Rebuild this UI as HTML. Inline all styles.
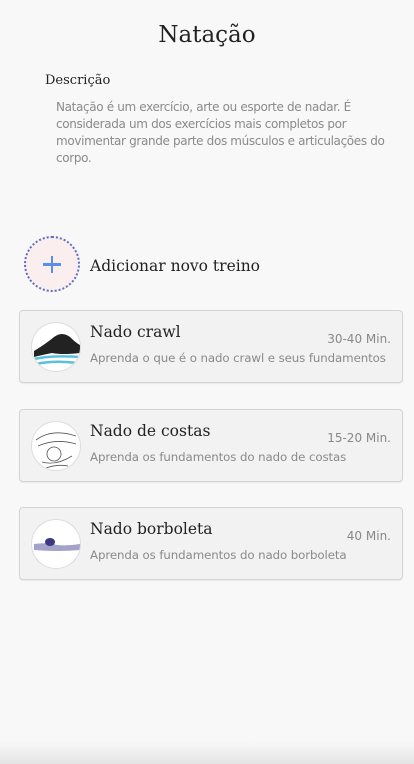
<!DOCTYPE html>
<html><head><meta charset="utf-8"><style>
*{margin:0;padding:0;box-sizing:border-box}
body{width:414px;height:764px;background:#f8f8f8;position:relative;overflow:hidden;font-family:"DejaVu Sans","Liberation Sans",sans-serif}
.serif{font-family:"DejaVu Serif","Liberation Serif",serif;color:#222}
.abs{position:absolute}
h1{position:absolute;top:22px;left:0;width:414px;text-align:center;font-size:23px;font-weight:normal}
.desc{left:45px;top:73px;font-size:13px}
.dtext{left:56px;top:99px;width:345px;font-size:12px;line-height:17px;color:#8a8a8a;letter-spacing:-0.35px}
.add{left:24px;top:236px;width:56px;height:56px;border-radius:50%;border:2px dotted #5a6fc8;background:#fbeeee}
.add:before{content:"";position:absolute;left:17px;top:25px;width:18px;height:2.5px;background:#5b8def}
.add:after{content:"";position:absolute;left:24.7px;top:18px;width:2.5px;height:17px;background:#5b8def}
.addt{left:90px;top:257px;font-size:15.5px}
.card{position:absolute;left:19px;width:384px;height:73px;border:1px solid #d4d4d4;border-radius:4px;background:#f2f2f2;box-shadow:0 1px 1px rgba(0,0,0,.06)}
.img{position:absolute;left:11px;top:11px;width:50px;height:50px;border-radius:50%;background:#fff;border:1px solid #ddd;overflow:hidden}
.t{position:absolute;left:70px;top:12px;font-size:15.5px}
.m{position:absolute;right:11px;top:21px;font-size:12px;color:#888}
.s{position:absolute;left:70px;top:40px;font-size:11.8px;color:#8a8a8a;letter-spacing:-0.1px}
.shadow{left:0;top:742px;width:414px;height:22px;background:linear-gradient(#f8f8f8,#e4e4e4)}
</style></head><body>
<h1 class="serif">Natação</h1>
<div class="abs serif desc">Descrição</div>
<div class="abs dtext">Natação é um exercício, arte ou esporte de nadar. É considerada um dos exercícios mais completos por movimentar grande parte dos músculos e articulações do corpo.</div>
<div class="abs add"></div>
<div class="abs serif addt">Adicionar novo treino</div>

<div class="card" style="top:310px"><div class="img"><svg width="50" height="50"><path d="M2 28 Q15 20 22 14 Q30 8 38 14 Q44 20 48 22 L48 30 Q30 32 20 30 Q10 32 2 34Z" fill="#222"/><path d="M2 36 Q20 32 48 34 M4 41 Q22 37 46 40" stroke="#5bc0de" stroke-width="2.5" fill="none"/></svg></div><div class="t serif">Nado crawl</div><div class="m">30-40 Min.</div><div class="s">Aprenda o que é o nado crawl e seus fundamentos</div></div>

<div class="card" style="top:409px"><div class="img"><svg width="50" height="50" fill="none" stroke="#555" stroke-width="0.8"><path d="M4 18 Q20 6 44 14 M6 24 Q24 16 44 22"/><circle cx="22" cy="32" r="7"/><path d="M10 40 Q24 44 40 34 M14 46 Q26 42 36 44"/></svg></div><div class="t serif">Nado de costas</div><div class="m">15-20 Min.</div><div class="s">Aprenda os fundamentos do nado de costas</div></div>

<div class="card" style="top:507px"><div class="img"><svg width="50" height="50"><path d="M2 24 Q15 22 25 25 Q36 26 48 24 L48 30 Q25 32 2 30Z" fill="#7a7ab5" opacity=".7"/><ellipse cx="18" cy="22" rx="5" ry="4" fill="#3a3a80"/></svg></div><div class="t serif">Nado borboleta</div><div class="m">40 Min.</div><div class="s">Aprenda os fundamentos do nado borboleta</div></div>

<div class="abs shadow"></div>
</body></html>
